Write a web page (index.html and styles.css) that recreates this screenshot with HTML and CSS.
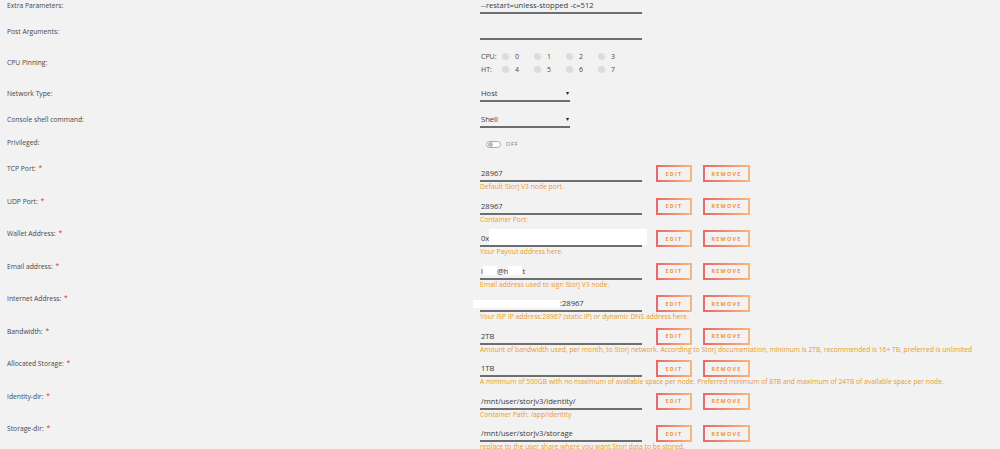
FILE: index.html
```html
<!DOCTYPE html>
<html lang="en">
<head>
    <meta charset="UTF-8">
    <meta name="viewport" content="width=device-width, initial-scale=1.0">
    <title>Storj V3 node - container settings</title>
    <link rel="stylesheet" href="styles.css">
</head>
<body>
    <div class="form">
        <div class="row row-a">
            <div class="label pad-1">Extra Parameters:</div>
            <div class="input wide">--restart=unless-stopped -c=512</div>
        </div>
        <div class="row row-b">
            <div class="label pad-1">Post Arguments:</div>
            <div class="input wide"></div>
        </div>
        <div class="row row-cpu">
            <div class="label pad-8">CPU Pinning:</div>
            <div class="pins">
                <span class="pin-head">CPU:</span>
                <span class="pin"><i></i>0</span>
                <span class="pin"><i></i>1</span>
                <span class="pin"><i></i>2</span>
                <span class="pin"><i></i>3</span>
                <span class="pin-head">HT:</span>
                <span class="pin"><i></i>4</span>
                <span class="pin"><i></i>5</span>
                <span class="pin"><i></i>6</span>
                <span class="pin"><i></i>7</span>
            </div>
        </div>
        <div class="row row-a">
            <div class="label pad-1">Network Type:</div>
            <div class="input select">Host<span class="caret">&#9662;</span></div>
        </div>
        <div class="row row-b">
            <div class="label pad-1">Console shell command:</div>
            <div class="input select">Shell<span class="caret">&#9662;</span></div>
        </div>
        <div class="row row-priv">
            <div class="label">Privileged:</div>
            <div class="switch-wrap"><span class="switch"><i></i></span><span class="switch-text">OFF</span></div>
        </div>

        <!-- config entries -->
        <div class="row row-cfg">
            <div class="label pad-1">TCP Port: <span class="req">*</span></div>
            <div class="cfg">
                <div class="cfg-line">
                    <div class="input wide">28967</div>
                    <span class="btn btn-edit">EDIT</span>
                    <span class="btn btn-remove">REMOVE</span>
                </div>
                <div class="desc">Default Storj V3 node port.</div>
            </div>
        </div>
        <div class="row row-cfg">
            <div class="label pad-1">UDP Port: <span class="req">*</span></div>
            <div class="cfg">
                <div class="cfg-line">
                    <div class="input wide">28967</div>
                    <span class="btn btn-edit">EDIT</span>
                    <span class="btn btn-remove">REMOVE</span>
                </div>
                <div class="desc">Container Port:</div>
            </div>
        </div>
        <div class="row row-cfg">
            <div class="label pad-1">Wallet Address: <span class="req">*</span></div>
            <div class="cfg">
                <div class="cfg-line">
                    <div class="input wide">0x<span class="hide hide-wallet"></span></div>
                    <span class="btn btn-edit">EDIT</span>
                    <span class="btn btn-remove">REMOVE</span>
                </div>
                <div class="desc">Your Payout address here.</div>
            </div>
        </div>
        <div class="row row-cfg">
            <div class="label pad-1">Email address: <span class="req">*</span></div>
            <div class="cfg">
                <div class="cfg-line">
                    <div class="input wide">i<span class="hide hide-mail1"></span>@h<span class="hide hide-mail2"></span>t</div>
                    <span class="btn btn-edit">EDIT</span>
                    <span class="btn btn-remove">REMOVE</span>
                </div>
                <div class="desc">Email address used to sign Storj V3 node.</div>
            </div>
        </div>
        <div class="row row-cfg">
            <div class="label pad-1">Internet Address: <span class="req">*</span></div>
            <div class="cfg">
                <div class="cfg-line">
                    <div class="input wide"><span class="hide hide-ip"></span>:28967</div>
                    <span class="btn btn-edit">EDIT</span>
                    <span class="btn btn-remove">REMOVE</span>
                </div>
                <div class="desc">Your ISP IP address:28967 (static IP) or dynamic DNS address here.</div>
            </div>
        </div>
        <div class="row row-cfg">
            <div class="label pad-1">Bandwidth: <span class="req">*</span></div>
            <div class="cfg">
                <div class="cfg-line">
                    <div class="input wide">2TB</div>
                    <span class="btn btn-edit">EDIT</span>
                    <span class="btn btn-remove">REMOVE</span>
                </div>
                <div class="desc">Amount of bandwidth used, per month, to Storj network. According to Storj documentation, minimum is 2TB, recommended is 16+ TB, preferred is unlimited</div>
            </div>
        </div>
        <div class="row row-cfg">
            <div class="label pad-1">Allocated Storage: <span class="req">*</span></div>
            <div class="cfg">
                <div class="cfg-line">
                    <div class="input wide">1TB</div>
                    <span class="btn btn-edit">EDIT</span>
                    <span class="btn btn-remove">REMOVE</span>
                </div>
                <div class="desc">A minimum of 500GB with no maximum of available space per node. Preferred minimum of 8TB and maximum of 24TB of available space per node.</div>
            </div>
        </div>
        <div class="row row-cfg">
            <div class="label pad-1">Identity-dir: <span class="req">*</span></div>
            <div class="cfg">
                <div class="cfg-line">
                    <div class="input wide">/mnt/user/storjv3/identity/</div>
                    <span class="btn btn-edit">EDIT</span>
                    <span class="btn btn-remove">REMOVE</span>
                </div>
                <div class="desc">Container Path: /app/identity</div>
            </div>
        </div>
        <div class="row row-cfg">
            <div class="label pad-1">Storage-dir: <span class="req">*</span></div>
            <div class="cfg">
                <div class="cfg-line">
                    <div class="input wide">/mnt/user/storjv3/storage</div>
                    <span class="btn btn-edit">EDIT</span>
                    <span class="btn btn-remove">REMOVE</span>
                </div>
                <div class="desc">replace to the user share where you want Storj data to be stored.</div>
            </div>
        </div>
    </div>
</body>
</html>
```

FILE: styles.css
```css
:root {
    --bg: #f2f2f2;
    --text: #484848;
    --value: #3a3a3a;
    --line: #6e6e6e;
    --help: #eb9a28;
    --red: #e22828;
    --orange: #ff8c2f;
}

* {
    box-sizing: border-box;
    margin: 0;
    padding: 0;
}

body {
    background: var(--bg);
    color: var(--text);
    font-family: "Open Sans", sans-serif;
    width: 1000px;
    height: 449px;
    overflow: hidden;
}

.form {
    padding-left: 7px;
}

.row {
    display: grid;
    grid-template-columns: 473px 1fr;
    align-items: start;
}

.row-a { height: 26px; }
.row-b { height: 24px; }
.row-cpu { height: 38px; }
.row-priv { height: 25px; }
.row-cfg { height: 32.5px; }

.label {
    font-size: 6.75px;
    line-height: 10px;
    white-space: nowrap;
}

.pad-1 { padding-top: 1px; }
.pad-8 { padding-top: 8px; }

.req {
    color: var(--red);
    margin-left: 1px;
}

/* inputs */
.input {
    height: 14px;
    font-size: 7.6px;
    line-height: 10px;
    color: var(--value);
    padding-left: 1px;
    border-bottom: 2px solid var(--line);
    white-space: nowrap;
}

.wide { width: 162px; }

.select {
    width: 90px;
    display: flex;
    justify-content: space-between;
}

.caret {
    font-size: 6px;
    color: #222;
    padding-right: 1px;
}

.hide {
    display: inline-block;
    background: #fff;
    vertical-align: top;
}

.hide-wallet {
    width: 158px;
    height: 16px;
    margin-top: -4px;
}

.hide-mail1 { width: 14px; height: 9px; }
.hide-mail2 { width: 14px; height: 9px; }

.hide-ip {
    width: 87px;
    height: 8px;
    margin-left: -8px;
    margin-top: 2px;
}

/* cpu pinning */
.pins {
    display: grid;
    grid-template-columns: 21px repeat(4, 32px);
    grid-auto-rows: 13px;
    align-items: center;
    font-size: 7px;
    padding-left: 1px;
}

.pin {
    display: flex;
    align-items: center;
    gap: 6px;
}

.pin i {
    width: 7px;
    height: 7px;
    border-radius: 50%;
    background: #dcdcdc;
}

/* privileged switch */
.switch-wrap {
    display: flex;
    align-items: center;
    gap: 5px;
    padding: 2px 0 0 6px;
}

.switch {
    width: 15px;
    height: 7px;
    border-radius: 4px;
    border: 1px solid #aaa;
    background: #fff;
    display: flex;
    align-items: center;
    padding-left: 1px;
}

.switch i {
    width: 5px;
    height: 5px;
    border-radius: 50%;
    background: #bdbdbd;
}

.switch-text {
    font-size: 5.5px;
    letter-spacing: 0.8px;
    color: #777;
}

/* config entries */
.cfg {
    padding-top: 2px;
}

.cfg-line {
    display: flex;
    align-items: flex-end;
}

.btn {
    height: 17px;
    display: flex;
    align-items: center;
    justify-content: center;
    border: 2px solid;
    border-image: linear-gradient(90deg, rgba(226, 60, 60, 0.75), rgba(252, 160, 80, 0.75)) 1;
    color: #f3933a;
    font-size: 5.5px;
    font-weight: 700;
    letter-spacing: 1.2px;
}

.btn-edit {
    width: 36px;
    margin-left: 14px;
}

.btn-remove {
    width: 47px;
    margin-left: 11px;
}

.desc {
    font-size: 6.75px;
    line-height: 10px;
    color: var(--help);
    white-space: nowrap;
}
```
